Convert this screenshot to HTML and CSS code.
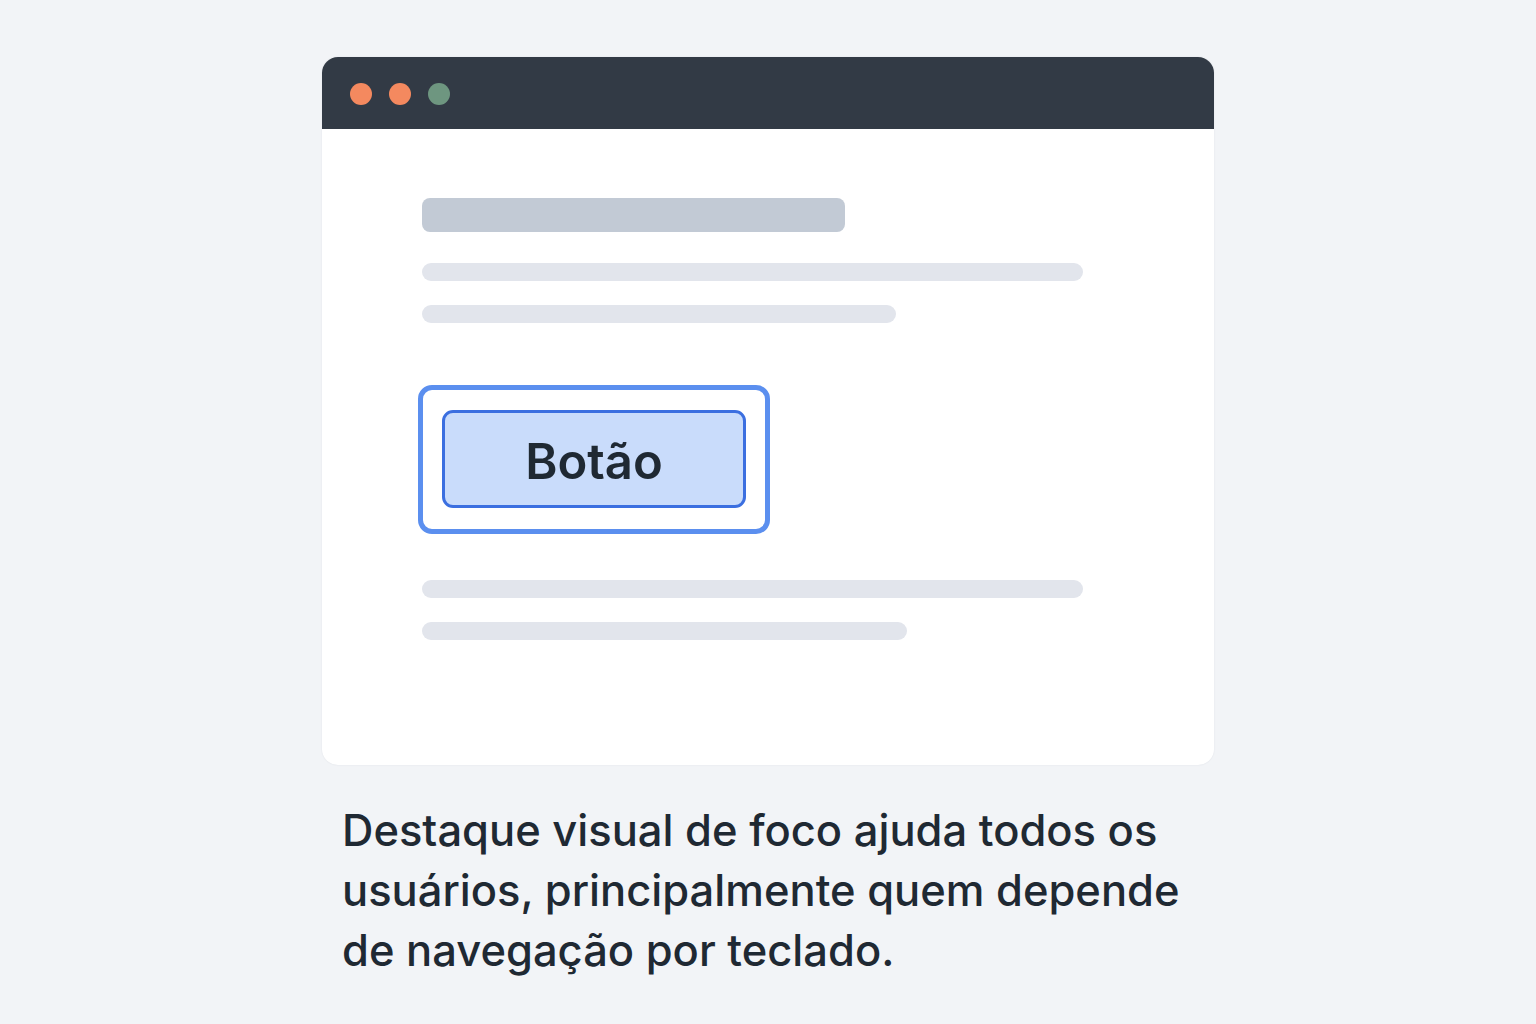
FILE: index.html
```html
<!DOCTYPE html>
<html lang="pt-BR">
<head>
    <meta charset="UTF-8">
    <meta name="viewport" content="width=device-width, initial-scale=1.0">
    <title>Destaque de foco</title>
    <link rel="stylesheet" href="styles.css">
</head>
<body>

    <div class="window">
        <div class="titlebar">
            <span class="dot dot-orange"></span>
            <span class="dot dot-orange"></span>
            <span class="dot dot-green"></span>
        </div>

        <div class="content">
            <div class="skeleton heading"></div>
            <div class="skeleton line long"></div>
            <div class="skeleton line short"></div>

            <div class="focus-ring">
                <button class="btn">Botão</button>
            </div>

            <div class="skeleton line long after"></div>
            <div class="skeleton line medium"></div>
        </div>
    </div>

    <p class="caption">Destaque visual de foco ajuda todos os usuários, principalmente quem depende de navegação por teclado.</p>

</body>
</html>
```

FILE: styles.css
```css
body {
    margin: 0;
    font-family: Inter, "Noto Sans", sans-serif;
    background-color: #f2f4f7;
    display: flex;
    flex-direction: column;
    align-items: center;
}
.window {
    width: 892px;
    margin-top: 57px;
    background: white;
    border-radius: 16px;
    overflow: hidden;
    box-shadow: 0 0 2px rgba(30, 40, 60, 0.08);
}
.titlebar {
    height: 72px;
    background: #323a45;
    display: flex;
    align-items: center;
    gap: 17px;
    padding: 2px 0 0 28px;
    box-sizing: border-box;
}
.dot {
    width: 22px;
    height: 22px;
    border-radius: 50%;
}
.dot-orange {
    background: #f4895f;
}
.dot-green {
    background: #6e9680;
}
.content {
    padding: 69px 100px 125px;
    display: flex;
    flex-direction: column;
    align-items: flex-start;
}
.skeleton {
    background: #e2e5ec;
    border-radius: 9px;
}
.heading {
    width: 423px;
    height: 34px;
    background: #c2cad5;
    border-radius: 8px;
}
.line {
    height: 18px;
}
.heading + .line {
    margin-top: 31px;
}
.line + .line {
    margin-top: 24px;
}
.long {
    width: 661px;
}
.short {
    width: 474px;
}
.medium {
    width: 485px;
}
.focus-ring {
    margin: 62px 0 0 -4px;
    padding: 20px 19px 21px 19px;
    border: 5px solid #5b8fef;
    border-radius: 14px;
}
.btn {
    display: block;
    width: 304px;
    height: 98px;
    background: #c9dcfb;
    border: 3px solid #3b6fe0;
    border-radius: 11px;
    font-family: Inter, "Noto Sans", sans-serif;
    font-size: 49px;
    font-weight: 600;
    color: #1f2933;
    padding: 4px 0 0;
}
.line.after {
    margin-top: 46px;
}
.caption {
    width: 852px;
    margin: 35px 0 0;
    font-size: 43.5px;
    line-height: 60px;
    font-weight: 500;
    color: #1f2933;
}
```
